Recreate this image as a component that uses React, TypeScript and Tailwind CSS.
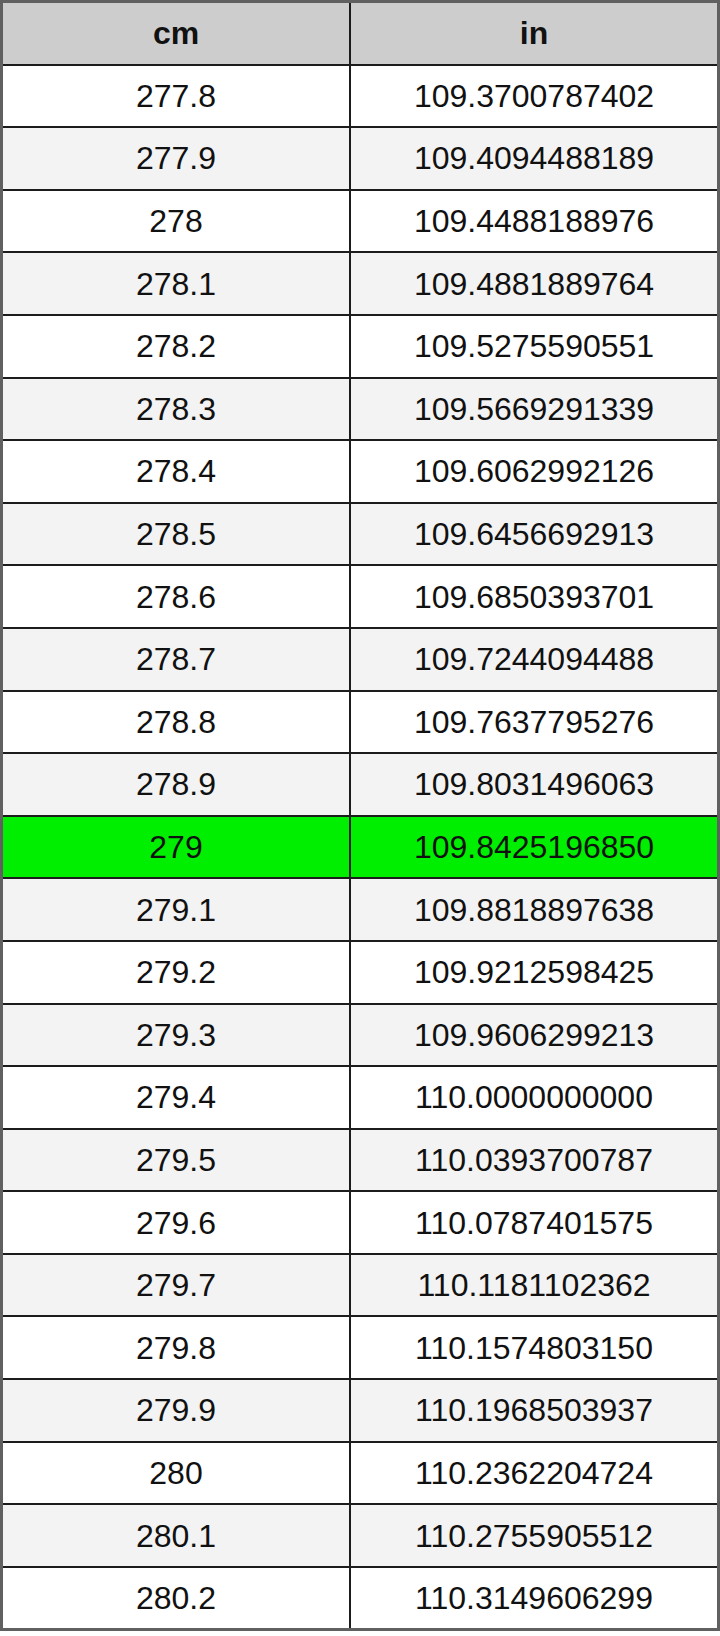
import React from "react";

const rows: [string, string][] = [
  ["277.8", "109.3700787402"],
  ["277.9", "109.4094488189"],
  ["278", "109.4488188976"],
  ["278.1", "109.4881889764"],
  ["278.2", "109.5275590551"],
  ["278.3", "109.5669291339"],
  ["278.4", "109.6062992126"],
  ["278.5", "109.6456692913"],
  ["278.6", "109.6850393701"],
  ["278.7", "109.7244094488"],
  ["278.8", "109.7637795276"],
  ["278.9", "109.8031496063"],
  ["279", "109.8425196850"],
  ["279.1", "109.8818897638"],
  ["279.2", "109.9212598425"],
  ["279.3", "109.9606299213"],
  ["279.4", "110.0000000000"],
  ["279.5", "110.0393700787"],
  ["279.6", "110.0787401575"],
  ["279.7", "110.1181102362"],
  ["279.8", "110.1574803150"],
  ["279.9", "110.1968503937"],
  ["280", "110.2362204724"],
  ["280.1", "110.2755905512"],
  ["280.2", "110.3149606299"],
];

export default function App() {
  return (
    <div
      className="w-[720px] h-[1636px] bg-white text-[#111]"
      style={{ fontFamily: '"Liberation Sans", Arial, sans-serif' }}
    >
      <div className="w-[720px] border-[3px] border-[#606060] bg-[#1c1c1c] flex flex-col gap-[2px]">
        <div className="flex h-[60.6px] gap-[2px]">
          <div className="w-[346px] bg-[#cdcdcd] flex items-center justify-center text-[32px] font-bold">cm</div>
          <div className="flex-1 bg-[#cdcdcd] flex items-center justify-center text-[32px] font-bold">in</div>
        </div>
        {rows.map(([a, b], i) => {
          const hl = a === "279";
          const bg = hl ? "bg-[#00ee00]" : i % 2 === 0 ? "bg-white" : "bg-[#f3f3f3]";
          return (
            <div key={a} className="flex h-[60.6px] gap-[2px]">
              <div className={`w-[346px] ${bg} flex items-center justify-center text-[32px]`}>{a}</div>
              <div className={`flex-1 ${bg} flex items-center justify-center text-[32px]`}>{b}</div>
            </div>
          );
        })}
      </div>
    </div>
  );
}
